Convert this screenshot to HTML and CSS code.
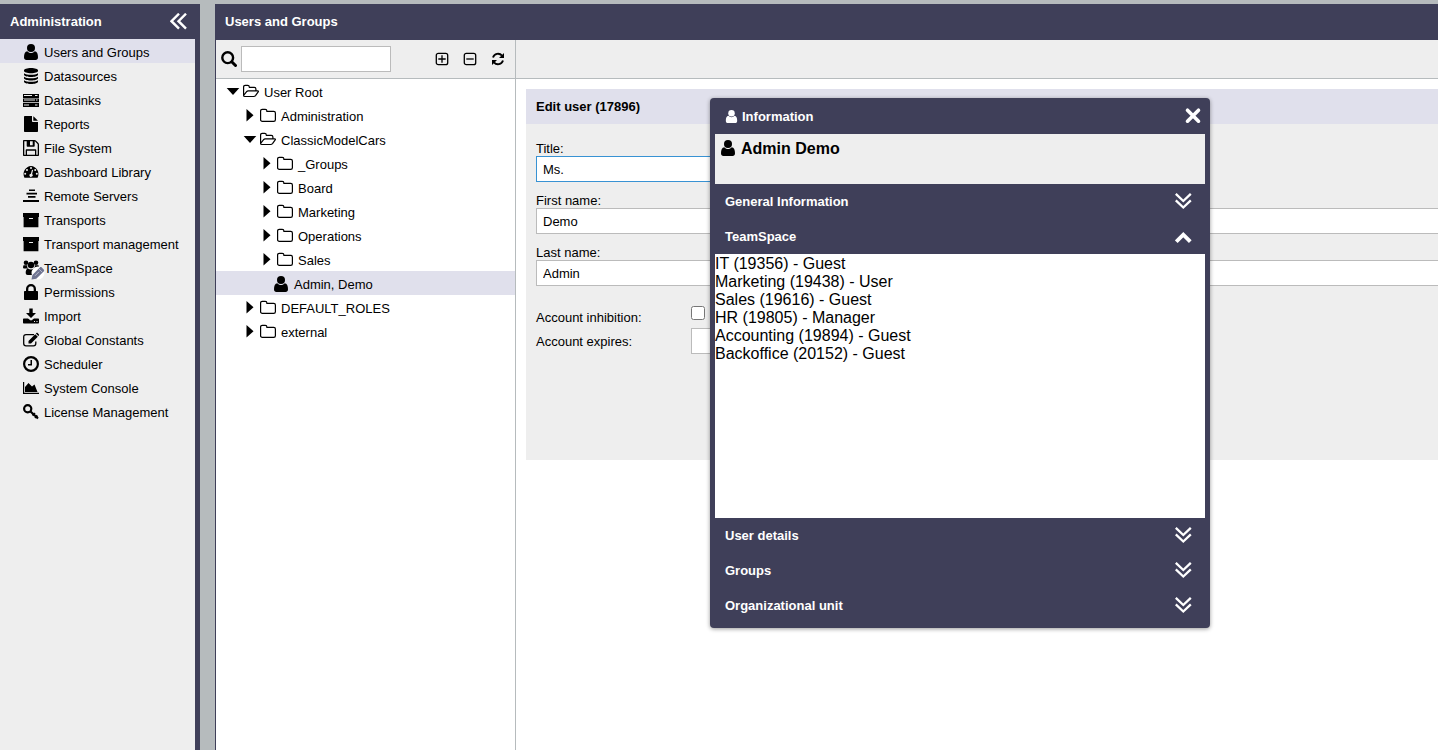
FILE: index.html
```
<!DOCTYPE html>
<html lang="en">
<head>
    <meta charset="UTF-8">
    <meta name="viewport" content="width=device-width, initial-scale=1.0">
    <title>Administration - Users and Groups</title>
    <link rel="stylesheet" href="styles.css">
</head>
<body>
    <!-- icon set -->
    <svg class="icon-defs" aria-hidden="true">
        <symbol id="i-user" viewBox="0 0 16 16"><circle cx="8" cy="4" r="4"/><path d="M4.300 7.200C2 7.400 1 9.800 1 13.200C1 15 2 16 3.400 16h9.200C14 16 15 15 15 13.200c0-3.400-1-5.800-3.300-6C10.800 8.300 9.500 9 8 9S5.200 8.300 4.300 7.200z"/></symbol>
        <symbol id="i-database" viewBox="0 0 16 16"><path d="M8 0c3.900 0 7 1.100 7 2.300v.8C15 4.300 11.900 5.300 8 5.300S1 4.300 1 3.100v-.8C1 1.100 4.100 0 8 0z"/><path d="M1 5.200c1.400 1 4 1.500 7 1.500s5.600-.5 7-1.500v1.500C15 7.900 11.900 9 8 9S1 7.900 1 6.700z"/><path d="M1 8.700c1.400 1 4 1.500 7 1.500s5.600-.5 7-1.500v1.500c0 1.200-3.100 2.300-7 2.300s-7-1.100-7-2.300z"/><path d="M1 12.200c1.400 1 4 1.500 7 1.500s5.600-.5 7-1.500v1.500c0 1.200-3.100 2.300-7 2.300s-7-1.100-7-2.300z"/></symbol>
        <symbol id="i-server" viewBox="0 0 16 16"><path fill-rule="evenodd" d="M0 2h16v4H0zM1 3v1h8V3zM12 3v1h2.500V3zM0 6h16v4.500H0zM1 7.500v1h11v-1zM13 7.500v1h1.500v-1zM0 11h16v4H0zM1 12.500v1h5v-1zM12 12.500v1h2.500v-1z"/><path fill="#eee" d="M0 6h16v.5H0zM0 10.500h16v.5H0z"/></symbol>
        <symbol id="i-file" viewBox="0 0 16 16"><path d="M9 0v5.200c0 .5.300.8.800.8H15v9.200c0 .5-.3.800-.8.800H1.800c-.5 0-.8-.3-.8-.8V.8C1 .3 1.300 0 1.800 0zM10.300.2c.2.100.3.200.4.300l3.800 3.800c.1.100.2.200.3.500h-4.500z"/></symbol>
        <symbol id="i-floppy" viewBox="0 0 16 16"><path fill-rule="evenodd" d="M1 0h10.500c.5 0 1 .2 1.400.6l2.500 2.500c.4.400.6.900.6 1.400V15c0 .6-.4 1-1 1H1c-.6 0-1-.4-1-1V1c0-.6.4-1 1-1zM1.300 1.300v13.400h1.400v-4.400c0-.6.4-1 1-1h8.600c.6 0 1 .4 1 1v4.400h1.400V4.500c0-.2-.1-.4-.2-.6l-2.400-2.400-.4-.2v4.400c0 .6-.4 1-1 1h-6c-.6 0-1-.4-1-1V1.300zM4 10.700v4h8v-4zM7 1.300v4h2.700v-4z"/></symbol>
        <symbol id="i-gauge" viewBox="0 0 16 16"><path fill-rule="evenodd" d="M8 2a8 8 0 0 1 6.700 11.400c-.1.200-.4.400-.7.400H2c-.3 0-.6-.2-.7-.4A8 8 0 0 1 8 2zM2.200 8.800a1 1 0 1 0 0 2 1 1 0 0 0 0-2zM4 4.900a1 1 0 1 0 0 2 1 1 0 0 0 0-2zM8 3a1 1 0 1 0 0 2 1 1 0 0 0 0-2zM12.200 4.900a1 1 0 1 0 0 2 1 1 0 0 0 0-2zM13.800 8.800a1 1 0 1 0 0 2 1 1 0 0 0 0-2zM9 5.800L7.900 9.700a1.600 1.600 0 1 0 1.200.4L10.100 6.100z"/></symbol>
        <symbol id="i-lines" viewBox="0 0 16 16"><path d="M6 1.500h6V3H6zM3.500 4.700H14v1.800H3.500zM5 8h7.500v1.800H5zM0 12h16v2H0z"/></symbol>
        <symbol id="i-archive" viewBox="0 0 16 16"><path fill-rule="evenodd" d="M0 1h16v4h-.6v10.300H.6V5H0zM6 6v1h4V6z"/></symbol>
        <symbol id="i-team" viewBox="0 0 16 16"><circle cx="3" cy="2.800" r="2.300"/><circle cx="13" cy="2.800" r="2.300"/><circle cx="8" cy="5" r="3.200"/><path d="M.5 5.300h3.900C4 6.700 4.200 7.700 5 8.500H1.500C.5 8.500 0 8 0 7zM15.500 5.300h-3.900c.4 1.400.2 2.400-.6 3.200h3.500c1 0 1.500-.5 1.500-1.500zM5 8.500c1.800 1.200 4.200 1.200 6 0 1.700.3 2.300 2 2.300 4.300 0 1.500-.8 2.200-2 2.200H4.700c-1.200 0-2-.7-2-2.200 0-2.300.6-4 2.300-4.300z"/></symbol>
        <symbol id="i-pencil" viewBox="0 0 14 14"><circle cx="7" cy="7" r="6.500" fill="#fff"/><path fill="#6f7491" d="M.5 13.500l.9-4.600L8.800 1.500c.6-.6 1.400-.6 2 0l1.900 1.900c.6.600.6 1.400 0 2l-7.400 7.400z"/><path stroke="#c5c8d8" stroke-width=".8" d="M8 3l3.300 3.300M4 9.800l4-4" fill="none"/></symbol>
        <symbol id="i-lock" viewBox="0 0 16 16"><path fill-rule="evenodd" d="M3 7V5a5 5 0 0 1 10 0v2h1c.6 0 1 .4 1 1v7c0 .6-.4 1-1 1H2c-.6 0-1-.4-1-1V8c0-.6.4-1 1-1zM5.300 7h5.400V5a2.700 2.700 0 0 0-5.400 0z"/></symbol>
        <symbol id="i-import" viewBox="0 0 16 16"><path d="M6.300.5h3.400V5h3.300l-5 5-5-5h3.300z"/><path fill-rule="evenodd" d="M1 10.500h4l2 1.600c.6.500 1.400.5 2 0l2-1.600h4c.6 0 1 .4 1 1v3c0 .6-.4 1-1 1H1c-.6 0-1-.4-1-1v-3c0-.6.4-1 1-1zM11 13v1h1v-1zM13.500 13v1h1v-1z"/></symbol>
        <symbol id="i-edit" viewBox="0 0 16 16"><path fill="none" stroke="currentColor" stroke-width="1.300" d="M11 2.700H3C1.500 2.700.7 3.500.7 5v6.500c0 1.500.8 2.300 2.300 2.300h7.500c1.500 0 2.300-.8 2.300-2.300v-2"/><path d="M5.500 11.500V9L12.200 2.200l2.600 2.600L8 11.500zM12.900 1.500l.5-.5c.4-.4.8-.4 1.200 0l1.200 1.200c.4.400.4.800 0 1.200l-.5.500z"/></symbol>
        <symbol id="i-clock" viewBox="0 0 16 16"><circle cx="8" cy="8" r="6.900" fill="none" stroke="currentColor" stroke-width="2.200"/><path d="M7.500 4H9v5.500H5V8h2.500z"/></symbol>
        <symbol id="i-chart" viewBox="0 0 16 16"><path d="M0 2h1.200v10.800H16V14H0zM2 12V7l3.500-4L9 6.500l2.500-2L14.500 12z"/></symbol>
        <symbol id="i-key" viewBox="0 0 16 16"><g fill="none" stroke="currentColor"><circle cx="4.700" cy="4.700" r="3.600" stroke-width="2.200"/><path stroke-width="2.200" d="M7 7l8 7.500"/><path stroke-width="2" d="M9.500 11.500l2.400-2.400M12 13.900l2.400-2.400"/></g></symbol>
        <symbol id="i-search" viewBox="0 0 16 16"><g fill="none" stroke="currentColor"><circle cx="6.700" cy="6.700" r="5.400" stroke-width="2.400"/><path stroke-width="3" stroke-linecap="round" d="M11 11l3.500 3.500"/></g></symbol>
        <symbol id="i-plus" viewBox="0 0 16 16"><g fill="none" stroke="currentColor" stroke-width="1.300"><rect x="2.300" y="2.300" width="11.400" height="11.400" rx="2"/><path d="M4.300 8h7.400M8 4.300v7.400"/></g></symbol>
        <symbol id="i-minus" viewBox="0 0 16 16"><g fill="none" stroke="currentColor" stroke-width="1.300"><rect x="2.300" y="2.300" width="11.400" height="11.400" rx="2"/><path d="M4.300 8h7.400"/></g></symbol>
        <symbol id="i-refresh" viewBox="0 0 16 16"><path fill="none" stroke="currentColor" stroke-width="1.900" d="M3 6.500a5.200 5.200 0 0 1 9-1.800M13 9.500a5.200 5.200 0 0 1-9 1.800"/><path d="M14 2v5H9zM2 14V9h5z"/></symbol>
        <symbol id="i-folder" viewBox="0 0 16 16"><path fill="none" stroke="currentColor" stroke-width="1.200" d="M.6 3c0-1 .7-1.700 1.700-1.700h2.900c1 0 1.700.7 1.700 1.700v.4h6.800c1 0 1.700.7 1.700 1.700v6.600c0 1-.7 1.700-1.700 1.700H2.300c-1 0-1.700-.7-1.700-1.700z"/></symbol>
        <symbol id="i-folder-open" viewBox="0 0.500 16 16"><path fill="none" stroke="currentColor" stroke-width="1.200" stroke-linejoin="round" d="M.6 12V3.500c0-1 .6-1.700 1.600-1.700h2.500c1 0 1.600.7 1.600 1.700v.3h5c1 0 1.600.6 1.600 1.600v1.900M.6 12l3-3.900c.4-.5 1-.8 1.600-.8h9.400c.8 0 1 .5.600 1.100l-2.700 3.700c-.5.600-1.100.9-1.800.9H1.900C1 13 .6 12.600.6 12z"/></symbol>
        <symbol id="i-caret-right" viewBox="0 0 16 16"><path d="M4.500 1v12.500L11.500 7.200z"/></symbol>
        <symbol id="i-caret-down" viewBox="0 0 16 16"><path d="M1.700 4h12.600L8 11z"/></symbol>
        <symbol id="i-double-left" viewBox="0 0 18 18"><path fill="none" stroke="currentColor" stroke-width="2.400" d="M9 .7L1.500 8.200 9 15.700M16 .7L8.500 8.200l7.500 7.500"/></symbol>
        <symbol id="i-double-down" viewBox="0 0 18 18"><path fill="none" stroke="currentColor" stroke-width="2.300" d="M.8.800L8.300 8l7.500-7.200M.8 7.300l7.500 7.200 7.500-7.200"/></symbol>
        <symbol id="i-up" viewBox="0 0 18 18"><path fill="none" stroke="currentColor" stroke-width="3.800" d="M1.300 13.700l7-7 7 7"/></symbol>
        <symbol id="i-close" viewBox="0 0 18 18"><path fill="none" stroke="currentColor" stroke-width="3.600" stroke-linecap="round" d="M3.500 3.200l11 11M14.500 3.200l-11 11"/></symbol>
    </svg>

    <div class="app">
        <nav class="sidebar">
            <div class="panel-header">
                <h2>Administration</h2>
                <button class="icon-btn" aria-label="Collapse"><svg class="icon-lg"><use href="#i-double-left"/></svg></button>
            </div>
            <ul class="menu">
                <li><a class="active" href="#"><svg class="icon"><use href="#i-user"/></svg>Users and Groups</a></li>
                <li><a href="#"><svg class="icon"><use href="#i-database"/></svg>Datasources</a></li>
                <li><a href="#"><svg class="icon"><use href="#i-server"/></svg>Datasinks</a></li>
                <li><a href="#"><svg class="icon"><use href="#i-file"/></svg>Reports</a></li>
                <li><a href="#"><svg class="icon"><use href="#i-floppy"/></svg>File System</a></li>
                <li><a href="#"><svg class="icon"><use href="#i-gauge"/></svg>Dashboard Library</a></li>
                <li><a href="#"><svg class="icon"><use href="#i-lines"/></svg>Remote Servers</a></li>
                <li><a href="#"><svg class="icon"><use href="#i-archive"/></svg>Transports</a></li>
                <li><a href="#"><svg class="icon"><use href="#i-archive"/></svg>Transport management</a></li>
                <li><a href="#"><span class="icon-stack"><svg class="icon"><use href="#i-team"/></svg><svg class="icon-badge"><use href="#i-pencil"/></svg></span>TeamSpace</a></li>
                <li><a href="#"><svg class="icon"><use href="#i-lock"/></svg>Permissions</a></li>
                <li><a href="#"><svg class="icon"><use href="#i-import"/></svg>Import</a></li>
                <li><a href="#"><svg class="icon"><use href="#i-edit"/></svg>Global Constants</a></li>
                <li><a href="#"><svg class="icon"><use href="#i-clock"/></svg>Scheduler</a></li>
                <li><a href="#"><svg class="icon"><use href="#i-chart"/></svg>System Console</a></li>
                <li><a href="#"><svg class="icon"><use href="#i-key"/></svg>License Management</a></li>
            </ul>
        </nav>

        <main class="main">
            <div class="panel-header main-header">
                <h1>Users and Groups</h1>
            </div>
            <div class="columns">
                <section class="tree-pane">
                    <div class="toolbar">
                        <label class="search-label" for="search" aria-label="Search"><svg class="icon"><use href="#i-search"/></svg></label>
                        <input class="text-input search" id="search" type="text">
                        <div class="tools">
                            <button class="icon-btn" aria-label="Expand all"><svg class="icon"><use href="#i-plus"/></svg></button>
                            <button class="icon-btn" aria-label="Collapse all"><svg class="icon"><use href="#i-minus"/></svg></button>
                            <button class="icon-btn" aria-label="Reload"><svg class="icon"><use href="#i-refresh"/></svg></button>
                        </div>
                    </div>
                    <ul class="tree">
                        <li class="node"><svg class="icon caret"><use href="#i-caret-down"/></svg><svg class="icon"><use href="#i-folder-open"/></svg>User Root</li>
                        <li class="node level-1"><svg class="icon caret"><use href="#i-caret-right"/></svg><svg class="icon"><use href="#i-folder"/></svg>Administration</li>
                        <li class="node level-1"><svg class="icon caret"><use href="#i-caret-down"/></svg><svg class="icon"><use href="#i-folder-open"/></svg>ClassicModelCars</li>
                        <li class="node level-2"><svg class="icon caret"><use href="#i-caret-right"/></svg><svg class="icon"><use href="#i-folder"/></svg>_Groups</li>
                        <li class="node level-2"><svg class="icon caret"><use href="#i-caret-right"/></svg><svg class="icon"><use href="#i-folder"/></svg>Board</li>
                        <li class="node level-2"><svg class="icon caret"><use href="#i-caret-right"/></svg><svg class="icon"><use href="#i-folder"/></svg>Marketing</li>
                        <li class="node level-2"><svg class="icon caret"><use href="#i-caret-right"/></svg><svg class="icon"><use href="#i-folder"/></svg>Operations</li>
                        <li class="node level-2"><svg class="icon caret"><use href="#i-caret-right"/></svg><svg class="icon"><use href="#i-folder"/></svg>Sales</li>
                        <li class="node leaf selected"><svg class="icon"><use href="#i-user"/></svg>Admin, Demo</li>
                        <li class="node level-1"><svg class="icon caret"><use href="#i-caret-right"/></svg><svg class="icon"><use href="#i-folder"/></svg>DEFAULT_ROLES</li>
                        <li class="node level-1"><svg class="icon caret"><use href="#i-caret-right"/></svg><svg class="icon"><use href="#i-folder"/></svg>external</li>
                    </ul>
                </section>

                <section class="detail-pane">
                    <div class="toolbar"></div>
                    <form class="edit-form">
                        <h2 class="form-title">Edit user (17896)</h2>
                        <div class="form-body">
                            <div class="field">
                                <label for="title">Title:</label>
                                <input class="text-input short focused" id="title" type="text" value="Ms.">
                            </div>
                            <div class="field">
                                <label for="firstname">First name:</label>
                                <input class="text-input" id="firstname" type="text" value="Demo">
                            </div>
                            <div class="field">
                                <label for="lastname">Last name:</label>
                                <input class="text-input" id="lastname" type="text" value="Admin">
                            </div>
                            <div class="account">
                                <div class="account-row">
                                    <label for="inhibited">Account inhibition:</label>
                                    <input class="checkbox" id="inhibited" type="checkbox">
                                </div>
                                <div class="account-row">
                                    <label for="expires">Account expires:</label>
                                    <input class="text-input short" id="expires" type="text">
                                </div>
                            </div>
                        </div>
                    </form>
                </section>
            </div>
        </main>
    </div>

    <div class="dialog" role="dialog" aria-labelledby="dialog-title">
        <div class="dialog-header">
            <svg class="icon-sm"><use href="#i-user"/></svg>
            <h2 id="dialog-title">Information</h2>
            <button class="icon-btn" aria-label="Close"><svg class="icon-lg"><use href="#i-close"/></svg></button>
        </div>
        <div class="dialog-user">
            <svg class="icon"><use href="#i-user"/></svg>
            <h3>Admin Demo</h3>
        </div>
        <button class="section-btn">General Information<svg class="icon-lg"><use href="#i-double-down"/></svg></button>
        <button class="section-btn">TeamSpace<svg class="icon-lg"><use href="#i-up"/></svg></button>
        <ul class="section-content">
            <li>IT (19356) - Guest</li>
            <li>Marketing (19438) - User</li>
            <li>Sales (19616) - Guest</li>
            <li>HR (19805) - Manager</li>
            <li>Accounting (19894) - Guest</li>
            <li>Backoffice (20152) - Guest</li>
        </ul>
        <button class="section-btn">User details<svg class="icon-lg"><use href="#i-double-down"/></svg></button>
        <button class="section-btn">Groups<svg class="icon-lg"><use href="#i-double-down"/></svg></button>
        <button class="section-btn">Organizational unit<svg class="icon-lg"><use href="#i-double-down"/></svg></button>
    </div>
</body>
</html>
```
FILE: styles.css
```
* {
    box-sizing: border-box;
    margin: 0;
    padding: 0;
}

body {
    font-family: Arial, "Liberation Sans", sans-serif;
    font-size: 13px;
    line-height: 15px;
    color: #000;
    background-color: #b6bbbd;
    height: 100vh;
    overflow: hidden;
}

h1, h2 {
    font-size: 13px;
}

ul {
    list-style: none;
}

button, input {
    font: inherit;
}

svg {
    display: block;
    flex-shrink: 0;
    fill: currentColor;
}

.icon-defs {
    position: absolute;
    width: 0;
    height: 0;
}

.icon {
    width: 16px;
    height: 16px;
}

.icon-lg {
    width: 18px;
    height: 18px;
}

.icon-sm {
    width: 13px;
    height: 13px;
}

.icon-btn {
    border: none;
    background: none;
    color: inherit;
    cursor: pointer;
}

.app {
    display: flex;
    gap: 15px;
    height: 100%;
    padding-top: 4px;
}

.panel-header {
    display: flex;
    align-items: center;
    justify-content: space-between;
    height: 35px;
    padding: 0 7px 0 10px;
    background-color: #3f3f59;
    color: #fff;
}

/* Sidebar */
.sidebar {
    width: 200px;
    flex-shrink: 0;
    background-color: #eee;
    border-right: 5px solid #3f3f59;
}

.menu a {
    display: flex;
    align-items: center;
    gap: 5px;
    height: 24px;
    padding: 2px 0 0 23px;
    color: #000;
    text-decoration: none;
}

.menu a.active {
    background-color: #e0e0ec;
}

.icon-stack {
    position: relative;
}

.icon-badge {
    position: absolute;
    left: 8px;
    top: 6px;
    width: 14px;
    height: 14px;
}

/* Main panel */
.main {
    display: flex;
    flex-direction: column;
    flex: 1;
    min-width: 0;
    background-color: #fff;
    border-left: 1px solid #3f3f59;
}

.main-header {
    height: 36px;
    padding: 0 9px 2px;
}

.columns {
    display: flex;
    flex: 1;
}

.toolbar {
    display: flex;
    align-items: center;
    height: 39px;
    padding: 0 9px 0 5px;
    background-color: #eee;
    border-bottom: 1px solid #b6bbbd;
}

.text-input {
    width: 100%;
    height: 26px;
    padding: 0 6px;
    border: 1px solid #bbb;
    background-color: #fff;
    outline: none;
}

.text-input.short {
    width: 200px;
}

.text-input.focused {
    border-color: #3892d3;
}

.text-input.search {
    width: 150px;
    margin-left: 4px;
}

.tools {
    display: flex;
    gap: 12px;
    margin-left: auto;
}

.tree-pane {
    width: 300px;
    flex-shrink: 0;
    border-right: 1px solid #b6bbbd;
}

.node {
    display: flex;
    align-items: center;
    gap: 5px;
    height: 24px;
    padding: 2px 0 0 9px;
}

.node .caret {
    margin-right: -3px;
}

.level-1 {
    padding-left: 26px;
}

.level-2 {
    padding-left: 43px;
}

.leaf {
    padding-left: 57px;
}

.selected {
    background-color: #e0e0ec;
}

/* Edit form */
.detail-pane {
    flex: 1;
    min-width: 0;
    overflow: hidden;
}

.edit-form {
    margin: 10px -20px 0 10px;
    background-color: #eee;
}

.form-title {
    padding: 10px;
    background-color: #e0e0ec;
}

.form-body {
    display: flex;
    flex-direction: column;
    gap: 11px;
    min-height: 336px;
    padding: 17px 10px;
}

.field label {
    display: block;
}

.field .text-input {
    display: block;
}

.account {
    padding-top: 8px;
}

.account-row {
    display: flex;
    align-items: center;
    height: 24px;
}

.account-row label {
    width: 155px;
}

.checkbox {
    width: 14px;
    height: 14px;
    margin-bottom: 8px;
}

/* Information dialog */
.dialog {
    position: absolute;
    left: 710px;
    top: 98px;
    width: 500px;
    padding: 0 5px 5px;
    border-radius: 4px;
    background-color: #3f3f59;
    color: #fff;
    box-shadow: 0 1px 4px rgba(0, 0, 0, 0.4);
}

.dialog-header {
    display: flex;
    align-items: center;
    gap: 4px;
    height: 36px;
    padding: 0 3px 0 10px;
}

.dialog-header .icon-btn {
    margin-left: auto;
}

.dialog-user {
    display: flex;
    gap: 5px;
    height: 50px;
    padding: 6px 5px;
    background-color: #eee;
    color: #000;
}

.dialog-user h3 {
    font-size: 16px;
    line-height: 18px;
}

.section-btn {
    display: flex;
    align-items: center;
    justify-content: space-between;
    width: 100%;
    height: 35px;
    padding: 0 12px 0 10px;
    border: none;
    background: none;
    color: #fff;
    font-weight: bold;
    cursor: pointer;
}

.section-content {
    height: 264px;
    padding-top: 1px;
    overflow: auto;
    background-color: #fff;
    color: #000;
    font-size: 16px;
    line-height: 18px;
}
```
